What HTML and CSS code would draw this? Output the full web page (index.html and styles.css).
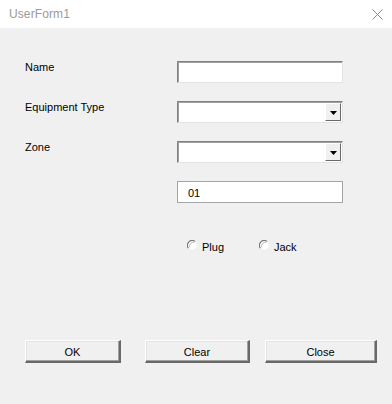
FILE: index.html
```html
<!DOCTYPE html>
<html>
<head>
<meta charset="utf-8">
<link rel="stylesheet" href="styles.css">
</head>
<body>
<div class="window">
  <div class="titlebar">
    <span class="title">UserForm1</span>
    <svg class="close" width="11" height="11" viewBox="0 0 11 11"><path d="M0.5 0.5 L10.5 10.5 M10.5 0.5 L0.5 10.5" stroke="#8a8a8a" stroke-width="1" fill="none"/></svg>
  </div>
  <div class="body">
    <div class="fields">
      <div class="label">Name</div>
      <div class="box"></div>
      <div class="label">Equipment Type</div>
      <div class="box combo"><div class="drop"><svg width="7" height="4" viewBox="0 0 7 4"><path d="M0 0 H7 L3.5 4 Z" fill="#000"/></svg></div></div>
      <div class="label">Zone</div>
      <div class="box combo"><div class="drop"><svg width="7" height="4" viewBox="0 0 7 4"><path d="M0 0 H7 L3.5 4 Z" fill="#000"/></svg></div></div>
      <div class="label"></div>
      <div class="box plain"><span class="value">01</span></div>
    </div>
    <div class="radios">
      <label class="radio"><svg width="11" height="11" viewBox="0 0 11 11"><circle cx="5.5" cy="5.5" r="4.8" fill="#fff" stroke="#e8e8e8" stroke-width="0.8"/><path d="M1.4 8.1 A4.8 4.8 0 0 1 8.1 1.4" stroke="#7a7a7a" stroke-width="1.1" fill="none"/><path d="M2.6 7.2 A3.6 3.6 0 0 1 7.2 2.6" stroke="#b0b0b0" stroke-width="0.8" fill="none"/></svg><span>Plug</span></label>
      <label class="radio jack"><svg width="11" height="11" viewBox="0 0 11 11"><circle cx="5.5" cy="5.5" r="4.8" fill="#fff" stroke="#e8e8e8" stroke-width="0.8"/><path d="M1.4 8.1 A4.8 4.8 0 0 1 8.1 1.4" stroke="#7a7a7a" stroke-width="1.1" fill="none"/><path d="M2.6 7.2 A3.6 3.6 0 0 1 7.2 2.6" stroke="#b0b0b0" stroke-width="0.8" fill="none"/></svg><span>Jack</span></label>
    </div>
    <div class="buttons">
      <div class="btn ok">OK</div>
      <div class="btn clear">Clear</div>
      <div class="btn closebtn">Close</div>
    </div>
  </div>
</div>
</body>
</html>
```

FILE: styles.css
```css
html, body {
  margin: 0;
  padding: 0;
  background: #f0f0f0;
}
.window {
  width: 392px;
  height: 404px;
  display: flex;
  flex-direction: column;
  font-family: "Liberation Sans", Arial, sans-serif;
  font-size: 11px;
  color: #000;
  overflow: hidden;
}
.titlebar {
  height: 28px;
  background: #fff;
  display: flex;
  align-items: center;
  justify-content: space-between;
  padding: 0 9px 0 9px;
  flex: none;
}
.title {
  font-size: 12px;
  color: #9a9a9a;
  letter-spacing: 0.1px;
}
.close {
  margin-top: 1px;
}
.body {
  flex: 1;
  background: #f0f0f0;
  padding: 33px 0 0 25px;
  display: flex;
  flex-direction: column;
}
.fields {
  display: grid;
  grid-template-columns: 152px 166px;
  grid-auto-rows: 22px;
  row-gap: 18px;
}
.label {
  line-height: 13px;
}
.box {
  box-sizing: border-box;
  height: 22px;
  background: #fff;
  border-top: 1px solid #828282;
  border-left: 1px solid #828282;
  border-right: 1px solid #e3e3e3;
  border-bottom: 1px solid #e3e3e3;
  box-shadow: inset 1px 1px 0 #a0a0a0;
  display: flex;
  justify-content: flex-end;
}
.box.plain {
  border: 1px solid #a5a5a5;
  box-shadow: none;
  justify-content: flex-start;
  align-items: center;
}
.value {
  padding-left: 10px;
  padding-top: 1px;
}
.drop {
  width: 16px;
  margin: 1px 1px 1px 0;
  box-sizing: border-box;
  background: #f0f0f0;
  border-top: 1px solid #fff;
  border-left: 1px solid #fff;
  border-right: 1px solid #696969;
  border-bottom: 1px solid #696969;
  display: flex;
  align-items: center;
  justify-content: center;
}
.drop svg {
  margin-top: 1px;
}
.radios {
  display: flex;
  margin: 35px 0 0 162px;
  height: 14px;
}
.radio {
  display: flex;
  align-items: center;
  gap: 4px;
  width: 72px;
}
.radio span {
  padding-top: 4px;
}
.buttons {
  display: flex;
  margin-top: 88px;
}
.btn {
  box-sizing: border-box;
  height: 23px;
  background: #f0f0f0;
  border-top: 1px solid #fff;
  border-left: 1px solid #fff;
  border-right: 2px solid #696969;
  border-bottom: 2px solid #696969;
  box-shadow: inset -1px -1px 0 #a0a0a0, 1px 1px 0 #e3e3e3 inset;
  display: flex;
  align-items: center;
  justify-content: center;
  padding-top: 1px;
}
.ok { width: 96px; }
.clear { width: 105px; margin-left: 24px; }
.closebtn { width: 112px; margin-left: 15px; }
```
